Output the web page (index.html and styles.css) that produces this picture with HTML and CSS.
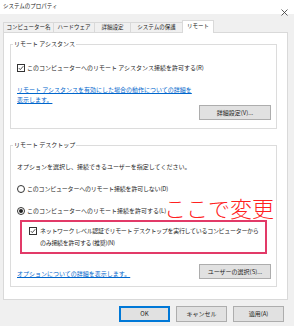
FILE: index.html
```html
<!DOCTYPE html>
<html lang="ja">
<head>
<meta charset="utf-8">
<link rel="stylesheet" href="styles.css">
</head>
<body>
<div class="window">
  <div class="titlebar">
    <span class="title">システムのプロパティ</span>
    <svg class="close" width="7" height="7" viewBox="0 0 7 7"><path d="M0.5 0.5L6.5 6.5M6.5 0.5L0.5 6.5" stroke="#333" stroke-width="0.8" fill="none"/></svg>
  </div>
  <div class="tabs">
    <div class="tab t1">コンピューター名</div>
    <div class="tab t2">ハードウェア</div>
    <div class="tab t3">詳細設定</div>
    <div class="tab t4">システムの保護</div>
    <div class="tab t5 active">リモート</div>
  </div>
  <div class="panel">
    <fieldset class="group g1">
      <legend>リモート アシスタンス</legend>
      <div class="opt check-row">
        <span class="cb"><svg width="6" height="6" viewBox="0 0 6 6"><path d="M0.8 3.1L2.3 4.6L5.3 1.2" stroke="#222" stroke-width="0.8" fill="none"/></svg></span>
        <span class="txt">このコンピューターへのリモート アシスタンス接続を許可する(R)</span>
      </div>
      <a class="link link1" href="#">リモート アシスタンスを有効にした場合の動作についての詳細を<br>表示します。</a>
      <div class="btn-row">
        <button class="btn wide">詳細設定(V)...</button>
      </div>
    </fieldset>
    <fieldset class="group g2">
      <legend>リモート デスクトップ</legend>
      <div class="desc">オプションを選択し、接続できるユーザーを指定してください。</div>
      <div class="opt radio-row r1">
        <span class="rb"></span>
        <span class="txt narrow">このコンピューターへのリモート接続を許可しない(D)</span>
      </div>
      <div class="opt radio-row r2">
        <span class="rb on"><span class="dot"></span></span>
        <span class="txt">このコンピューターへのリモート接続を許可する(L)</span>
      </div>
      <div class="highlight">
        <span class="cb"><svg width="6" height="6" viewBox="0 0 6 6"><path d="M0.8 3.1L2.3 4.6L5.3 1.2" stroke="#222" stroke-width="0.8" fill="none"/></svg></span>
        <span class="txt2">ネットワーク レベル認証でリモート デスクトップを実行しているコンピューターから<br>のみ接続を許可する (推奨)(N)</span>
      </div>
      <div class="bottom-row">
        <a class="link" href="#">オプションについての詳細を表示します。</a>
        <button class="btn wide">ユーザーの選択(S)...</button>
      </div>
    </fieldset>
  </div>
  <div class="footer">
    <button class="btn foot default">OK</button>
    <button class="btn foot">キャンセル</button>
    <button class="btn foot">適用(A)</button>
  </div>
  <div class="annot">ここで変更</div>
</div>
</body>
</html>
```

FILE: styles.css
```css
* { box-sizing: border-box; }
html, body { margin: 0; padding: 0; }
body {
  width: 294px;
  height: 326px;
  background: #f0f0f0;
  font-family: "Noto Sans CJK JP", "Noto Sans", sans-serif;
  font-size: 6px;
  color: #1e1e1e;
  overflow: hidden;
}
.window {
  position: relative;
  width: 294px;
  height: 326px;
}
.titlebar {
  height: 14px;
  background: #ffffff;
  display: flex;
  align-items: flex-start;
  justify-content: space-between;
  padding: 2px 6px 0 3px;
}
.title {
  font-size: 5.5px;
  line-height: 8px;
  color: #222;
}
.close { display: block; margin-top: 7px; }

.tabs {
  display: flex;
  align-items: flex-end;
  height: 12px;
  margin: 6px 0 0 3px;
}
.tab {
  height: 10px;
  border: 1px solid #d9d9d9;
  border-bottom: none;
  margin-right: -1px;
  font-size: 5.5px;
  line-height: 9px;
  text-align: center;
  white-space: nowrap;
  color: #222;
  background: #f0f0f0;
}
.t1 { width: 51px; }
.t2 { width: 42px; }
.t3 { width: 37px; }
.t4 { width: 53px; }
.t5 { width: 32px; }
.tab.active {
  height: 13px;
  margin-bottom: -1px;
  background: #ffffff;
  position: relative;
  z-index: 1;
  line-height: 11px;
}

.panel {
  width: 285px;
  height: 268px;
  margin-left: 3px;
  background: #ffffff;
  border: 1px solid #d9d9d9;
  padding: 7px 10px 0 6px;
}
.group {
  margin: 0;
  border: 1px solid #dcdcdc;
  padding: 0 5px 8px 6px;
  min-width: 0;
}
.group legend {
  padding: 0 1px;
  margin-left: -4px;
  line-height: 8px;
  white-space: nowrap;
}
.g2 {
  margin-top: 12px;
  padding-bottom: 7px;
}
.opt {
  display: flex;
  align-items: center;
  height: 8px;
  white-space: nowrap;
}
.txt { margin-left: 2px; line-height: 8px; }
.txt.narrow { letter-spacing: -0.2px; }
.check-row { margin-top: 16px; }
.cb {
  width: 8px;
  height: 8px;
  border: 1px solid #333;
  background: #fff;
  display: flex;
  align-items: center;
  justify-content: center;
  flex: none;
}
.cb svg { display: block; }
.rb {
  width: 8px;
  height: 8px;
  border: 1px solid #333;
  border-radius: 50%;
  display: flex;
  align-items: center;
  justify-content: center;
  flex: none;
}
.rb .dot {
  width: 4px;
  height: 4px;
  border-radius: 50%;
  background: #222;
}
.link {
  color: #0066cc;
  text-decoration: underline;
  white-space: nowrap;
  line-height: 8px;
}
.link1 {
  display: block;
  margin-top: 13px;
  line-height: 10px;
}
.btn-row {
  display: flex;
  justify-content: flex-end;
}
.btn {
  font-family: "Noto Sans CJK JP", "Noto Sans", sans-serif;
  font-size: 6px;
  color: #1e1e1e;
  background: #e1e1e1;
  border: 1px solid #adadad;
  padding: 0;
  margin: 0;
  height: 15px;
  line-height: 13px;
  white-space: nowrap;
}
.btn.wide { width: 72px; }

.desc {
  margin-top: 14px;
  line-height: 8px;
  white-space: nowrap;
}
.r1 { margin-top: 14px; }
.r2 { margin-top: 14px; }
.highlight {
  margin: 5px 0 0 3px;
  width: 247px;
  height: 34px;
  border: 2px solid #e23a68;
  padding: 3px 0 0 7px;
  display: flex;
  align-items: flex-start;
}
.highlight .cb { margin-top: 2px; }
.txt2 {
  margin-left: 3px;
  line-height: 12px;
  white-space: nowrap;
  letter-spacing: -0.3px;
}
.bottom-row {
  margin-top: 10px;
  display: flex;
  justify-content: space-between;
  align-items: flex-end;
}
.bottom-row .link { margin-bottom: 1px; }

.footer {
  display: flex;
  justify-content: flex-end;
  gap: 6px;
  margin-top: 6px;
  padding-right: 10px;
}
.btn.foot { width: 51px; height: 16px; line-height: 14px; }
.btn.default { border: 1px solid #0078d7; box-shadow: inset 0 0 0 1px #0078d7; }

.annot {
  position: absolute;
  left: 164px;
  top: 195px;
  font-size: 22px;
  line-height: 24px;
  color: #ff2020;
  font-weight: 300;
  white-space: nowrap;
}
```
